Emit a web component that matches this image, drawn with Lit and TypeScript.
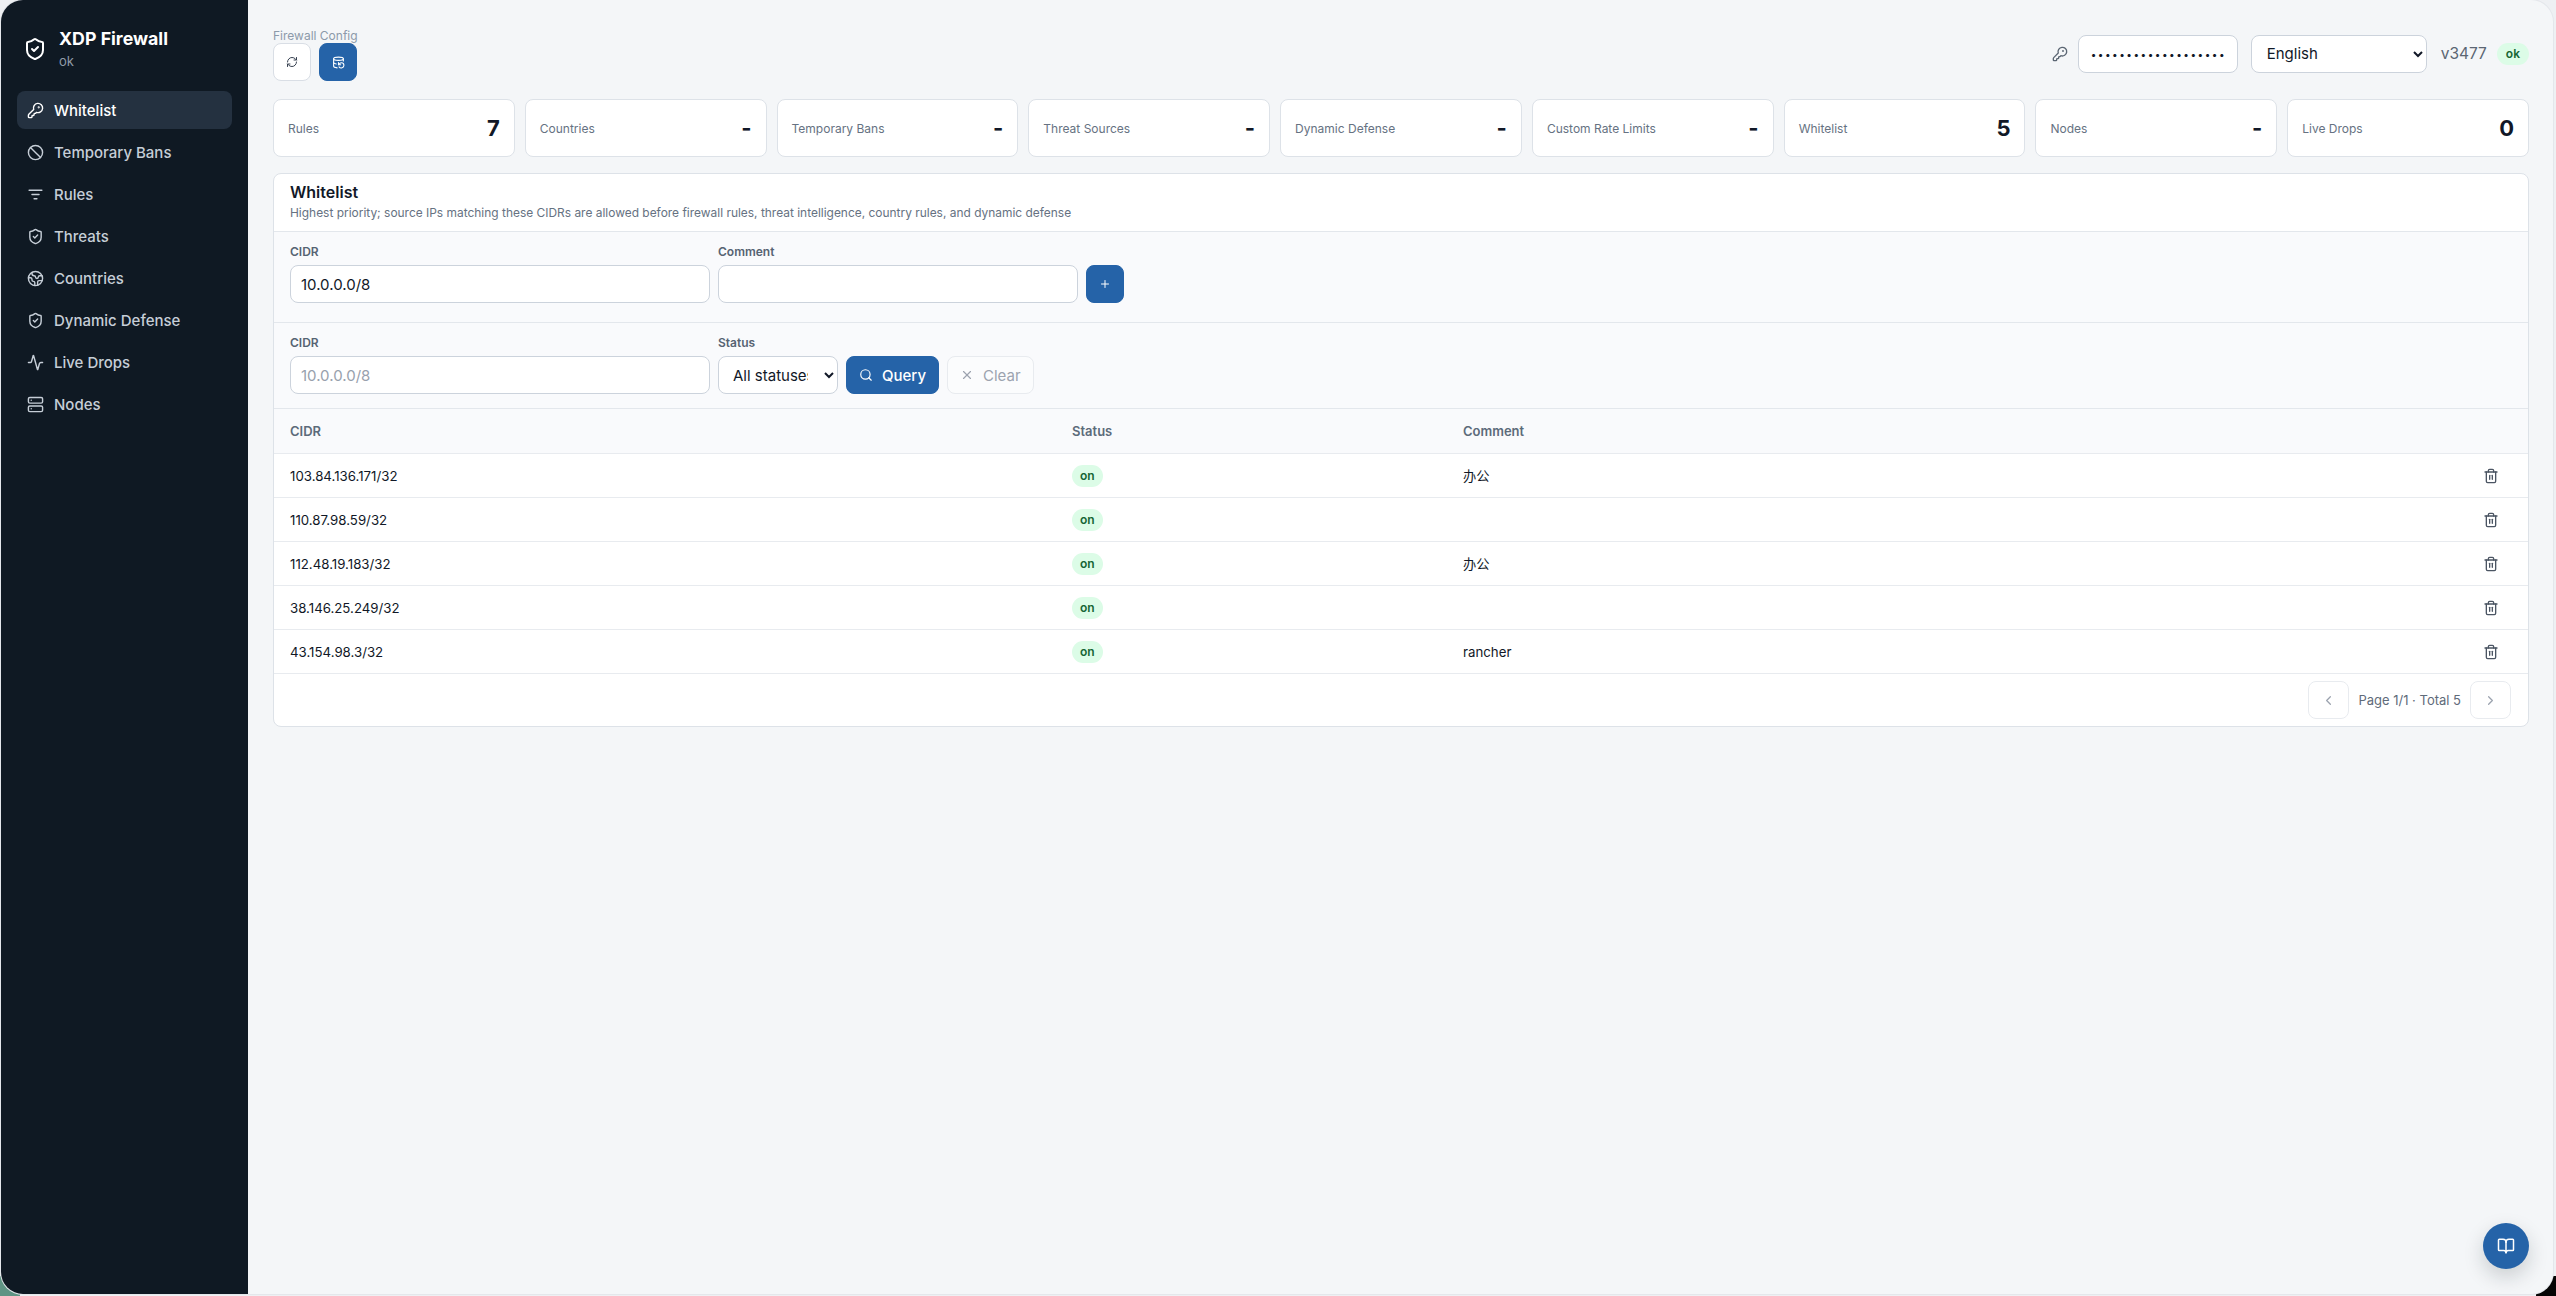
import { LitElement, html, css, svg } from "lit";
import { customElement } from "lit/decorators.js";

// lucide outlines, stroke only
const ICONS: Record<string, unknown> = {
  key: svg`<path d="M2.586 17.414A2 2 0 0 0 2 18.828V21a1 1 0 0 0 1 1h3a1 1 0 0 0 1-1v-1a1 1 0 0 1 1-1h1a1 1 0 0 0 1-1v-1a1 1 0 0 1 1-1h.172a2 2 0 0 0 1.414-.586l.814-.814a6.5 6.5 0 1 0-4-4z"/><circle cx="16.5" cy="7.5" r=".5" fill="currentColor"/>`,
  ban: svg`<circle cx="12" cy="12" r="10"/><path d="m4.9 4.9 14.2 14.2"/>`,
  filter: svg`<path d="M3 6h18"/><path d="M7 12h10"/><path d="M10 18h4"/>`,
  shield: svg`<path d="M20 13c0 5-3.5 7.5-7.66 8.95a1 1 0 0 1-.67-.01C7.5 20.5 4 18 4 13V6a1 1 0 0 1 1-1c2 0 4.5-1.2 6.24-2.72a1.17 1.17 0 0 1 1.52 0C14.51 3.81 17 5 19 5a1 1 0 0 1 1 1z"/><path d="m9 12 2 2 4-4"/>`,
  earth: svg`<path d="M21.54 15H17a2 2 0 0 0-2 2v4.54"/><path d="M7 3.34V5a3 3 0 0 0 3 3a2 2 0 0 1 2 2c0 1.1.9 2 2 2a2 2 0 0 0 2-2c0-1.1.9-2 2-2h3.17"/><path d="M11 21.95V18a2 2 0 0 0-2-2a2 2 0 0 1-2-2v-1a2 2 0 0 0-2-2H2.05"/><circle cx="12" cy="12" r="10"/>`,
  activity: svg`<path d="M22 12h-2.48a2 2 0 0 0-1.93 1.46l-2.35 8.36a.25.25 0 0 1-.48 0L9.24 2.18a.25.25 0 0 0-.48 0l-2.35 8.36A2 2 0 0 1 4.49 12H2"/>`,
  server: svg`<rect width="20" height="8" x="2" y="2" rx="2"/><rect width="20" height="8" x="2" y="14" rx="2"/><path d="M6 6h.01"/><path d="M6 18h.01"/>`,
  refresh: svg`<path d="M3 12a9 9 0 0 1 9-9 9.75 9.75 0 0 1 6.74 2.74L21 8"/><path d="M21 3v5h-5"/><path d="M21 12a9 9 0 0 1-9 9 9.75 9.75 0 0 1-6.74-2.74L3 16"/><path d="M8 16H3v5"/>`,
  database: svg`<ellipse cx="12" cy="5" rx="9" ry="3"/><path d="M3 12a9 3 0 0 0 5 2.69"/><path d="M21 9.3V5"/><path d="M3 5v14a9 3 0 0 0 6.47 2.88"/><path d="M12 12v4h4"/><path d="M13 20a5 5 0 0 0 9-3 4.5 4.5 0 0 0-4.5-4.5c-1.33 0-2.54.54-3.41 1.41L12 16"/>`,
  search: svg`<circle cx="11" cy="11" r="8"/><path d="m21 21-4.3-4.3"/>`,
  x: svg`<path d="M18 6 6 18"/><path d="m6 6 12 12"/>`,
  plus: svg`<path d="M5 12h14"/><path d="M12 5v14"/>`,
  trash: svg`<path d="M3 6h18"/><path d="M19 6v14c0 1-1 2-2 2H7c-1 0-2-1-2-2V6"/><path d="M8 6V4c0-1 1-2 2-2h4c1 0 2 1 2 2v2"/><path d="M10 11v6"/><path d="M14 11v6"/>`,
  left: svg`<path d="m15 18-6-6 6-6"/>`,
  right: svg`<path d="m9 18 6-6-6-6"/>`,
  book: svg`<path d="M12 7v14"/><path d="M3 18a1 1 0 0 1-1-1V4a1 1 0 0 1 1-1h5a4 4 0 0 1 4 4 4 4 0 0 1 4-4h5a1 1 0 0 1 1 1v13a1 1 0 0 1-1 1h-6a3 3 0 0 0-3 3 3 3 0 0 0-3-3z"/>`,
};

const icon = (name: string, size = 16) => html`<svg
  width=${size}
  height=${size}
  viewBox="0 0 24 24"
  fill="none"
  stroke="currentColor"
  stroke-width="2"
  stroke-linecap="round"
  stroke-linejoin="round"
>${ICONS[name]}</svg>`;

const NAV = [
  ["key", "Whitelist"],
  ["ban", "Temporary Bans"],
  ["filter", "Rules"],
  ["shield", "Threats"],
  ["earth", "Countries"],
  ["shield", "Dynamic Defense"],
  ["activity", "Live Drops"],
  ["server", "Nodes"],
];

const STATS = [
  ["Rules", "7"],
  ["Countries", "-"],
  ["Temporary Bans", "-"],
  ["Threat Sources", "-"],
  ["Dynamic Defense", "-"],
  ["Custom Rate Limits", "-"],
  ["Whitelist", "5"],
  ["Nodes", "-"],
  ["Live Drops", "0"],
];

const ROWS = [
  ["103.84.136.171/32", "办公"],
  ["110.87.98.59/32", ""],
  ["112.48.19.183/32", "办公"],
  ["38.146.25.249/32", ""],
  ["43.154.98.3/32", "rancher"],
];

@customElement("app-root")
export class AppRoot extends LitElement {
  static styles = css`
    :host {
      display: block;
      height: 100vh;
      box-sizing: border-box;
      padding: 0 3px 2px 1px;
      font-family: Inter, "Noto Sans CJK SC", sans-serif;
      color: #111827;
      background:
        linear-gradient(#5f9484, #5f9484) left bottom / 20px 20px no-repeat,
        linear-gradient(#050505, #050505) right bottom / 20px 20px no-repeat,
        #eef0f3;
    }
    * {
      box-sizing: border-box;
    }
    svg {
      display: block;
      flex: none;
    }
    .window {
      position: relative;
      display: flex;
      height: 100%;
      overflow: hidden;
      border-radius: 22px;
      background: #f4f6f8;
      box-shadow: 0 0 0 1px #e4e7eb;
    }
    .sidebar {
      flex: none;
      width: 247px;
      background: #0f1923;
      padding: 0 16px;
    }
    .brand {
      display: flex;
      align-items: center;
      gap: 12px;
      height: 91px;
      padding: 7px 0 0 6px;
      color: #fff;
    }
    .brand-name {
      font-size: 17.75px;
      font-weight: 700;
      line-height: 24px;
    }
    .brand-status {
      font-size: 13px;
      line-height: 20px;
      color: #8f9ba8;
    }
    .nav {
      display: flex;
      flex-direction: column;
      gap: 4px;
    }
    .nav-item {
      display: flex;
      align-items: center;
      gap: 10px;
      height: 38px;
      padding: 0 10px;
      border-radius: 8px;
      font-size: 15px;
      font-weight: 500;
      color: #c6ced7;
    }
    .nav-item.active {
      background: #243140;
      color: #fff;
    }
    .content {
      flex: 1;
      min-width: 0;
      padding: 28px 24px 0 25px;
    }
    .topbar {
      display: flex;
      align-items: center;
      justify-content: space-between;
      margin-bottom: 18px;
    }
    .crumb {
      font-size: 12px;
      line-height: 15px;
      color: #8c9aaa;
    }
    .actions {
      display: flex;
      gap: 8px;
    }
    .icon-btn {
      display: flex;
      align-items: center;
      justify-content: center;
      width: 38px;
      height: 38px;
      padding: 0;
      border: 1px solid #d9dee5;
      border-radius: 8px;
      background: #fff;
      color: #374151;
    }
    .icon-btn.primary {
      border-color: #2563a8;
      background: #2563a8;
      color: #fff;
    }
    .icon-btn.ghost {
      width: 41px;
      border-color: #e8ebef;
      color: #9ca3af;
    }
    .top-right {
      display: flex;
      align-items: center;
      margin-top: -2px;
      color: #5b6673;
    }
    .key {
      margin-right: 10px;
    }
    input,
    select {
      height: 38px;
      padding: 0 10px;
      border: 1px solid #ccd3dc;
      border-radius: 8px;
      background: #fff;
      color: #111827;
      font-family: inherit;
      font-size: 15px;
      outline: none;
    }
    input::placeholder {
      color: #98a1ad;
    }
    .password {
      width: 160px;
      padding: 0 12px;
      font-size: 10px;
      letter-spacing: 1.5px;
    }
    .lang {
      width: 176px;
      margin-left: 13px;
      padding: 0 5px 0 11px;
    }
    .version {
      margin-left: 14px;
      font-size: 15.5px;
    }
    .ok {
      margin-left: 10px;
      padding: 0 9px;
      border-radius: 999px;
      background: #dcfce7;
      color: #166534;
      font-size: 12px;
      font-weight: 600;
      line-height: 22px;
    }
    .stats {
      display: grid;
      grid-template-columns: repeat(9, 1fr);
      gap: 10px;
      margin-bottom: 16px;
    }
    .stat {
      display: flex;
      align-items: center;
      justify-content: space-between;
      height: 58px;
      padding: 0 14px;
      border: 1px solid #dde2e8;
      border-radius: 8px;
      background: #fff;
    }
    .stat-label {
      font-size: 12px;
      color: #667282;
    }
    .stat-value {
      font-size: 22px;
      font-weight: 700;
      line-height: 28px;
    }
    .card {
      border: 1px solid #dde2e8;
      border-radius: 8px;
      background: #fff;
      overflow: hidden;
    }
    .card-head {
      padding: 7px 16px 9px;
      border-bottom: 1px solid #e3e7ec;
    }
    .card-title {
      font-size: 16px;
      font-weight: 600;
      line-height: 22px;
    }
    .card-sub {
      padding-top: 1px;
      font-size: 11.95px;
      line-height: 18px;
      color: #667282;
    }
    .form {
      display: flex;
      align-items: flex-end;
      gap: 8px;
      padding: 12px 16px 14px;
      border-bottom: 1px solid #e3e7ec;
      background: #f9fafc;
    }
    .form.add {
      padding-bottom: 19px;
    }
    .field {
      display: flex;
      flex-direction: column;
    }
    .field label {
      margin-bottom: 5px;
      font-size: 12px;
      font-weight: 600;
      line-height: 16px;
      color: #566372;
    }
    .w-cidr {
      width: 420px;
    }
    .w-comment {
      width: 360px;
    }
    .w-status {
      width: 120px;
      padding: 0 13px 0 10px;
    }
    .btn {
      display: flex;
      align-items: center;
      gap: 9px;
      height: 38px;
      padding: 0 12px;
      border: 1px solid #2563a8;
      border-radius: 8px;
      background: #2563a8;
      color: #fff;
      font-family: inherit;
      font-size: 15px;
      font-weight: 500;
    }
    .btn.clear {
      border-color: #e8ebef;
      background: #fbfcfd;
      color: #9ca3af;
      font-weight: 400;
    }
    .row {
      display: grid;
      grid-template-columns: 782px 391px 1fr 45px;
      align-items: center;
      height: 44px;
      padding-left: 16px;
      border-bottom: 1px solid #e8ebef;
      font-size: 13.25px;
    }
    .row.head {
      height: 45px;
      background: #f9fafc;
      font-size: 13px;
      font-weight: 600;
      color: #5c6b7a;
    }
    .chip {
      display: inline-block;
      padding: 0 8px;
      border-radius: 999px;
      background: #dcfce7;
      color: #166534;
      font-size: 12px;
      font-weight: 600;
      line-height: 22px;
    }
    .trash {
      color: #4b5563;
    }
    .pager {
      display: flex;
      align-items: center;
      justify-content: flex-end;
      gap: 9px;
      height: 52px;
      padding: 0 17px 0 0;
      font-size: 13px;
      color: #5f6b7a;
    }
    .help {
      position: absolute;
      right: 24px;
      bottom: 25px;
      display: flex;
      align-items: center;
      justify-content: center;
      width: 46px;
      height: 46px;
      border-radius: 50%;
      background: #2563a8;
      color: #fff;
      box-shadow: 0 8px 20px rgba(15, 25, 35, 0.18);
    }
  `;

  render() {
    return html`
      <div class="window">
        <aside class="sidebar">
          <div class="brand">
            ${icon("shield", 24)}
            <div>
              <div class="brand-name">XDP Firewall</div>
              <div class="brand-status">ok</div>
            </div>
          </div>
          <nav class="nav">
            ${NAV.map(
              ([name, label], i) => html`
                <div class="nav-item ${i === 0 ? "active" : ""}">
                  ${icon(name, 17)}<span>${label}</span>
                </div>
              `
            )}
          </nav>
        </aside>
        <main class="content">
          <div class="topbar">
            <div>
              <div class="crumb">Firewall Config</div>
              <div class="actions">
                <button class="icon-btn">${icon("refresh", 12)}</button>
                <button class="icon-btn primary">${icon("database", 13)}</button>
              </div>
            </div>
            <div class="top-right">
              <span class="key">${icon("key", 16)}</span>
              <input class="password" type="password" value="12345678901234567890" />
              <select class="lang"><option>English</option></select>
              <span class="version">v3477</span>
              <span class="ok">ok</span>
            </div>
          </div>
          <section class="stats">
            ${STATS.map(
              ([label, value]) => html`
                <div class="stat">
                  <span class="stat-label">${label}</span>
                  <span class="stat-value">${value}</span>
                </div>
              `
            )}
          </section>
          <section class="card">
            <div class="card-head">
              <div class="card-title">Whitelist</div>
              <div class="card-sub">
                Highest priority; source IPs matching these CIDRs are allowed before firewall rules,
                threat intelligence, country rules, and dynamic defense
              </div>
            </div>
            <div class="form add">
              <div class="field">
                <label>CIDR</label>
                <input class="w-cidr" value="10.0.0.0/8" />
              </div>
              <div class="field">
                <label>Comment</label>
                <input class="w-comment" />
              </div>
              <button class="icon-btn primary">${icon("plus", 12)}</button>
            </div>
            <div class="form">
              <div class="field">
                <label>CIDR</label>
                <input class="w-cidr" placeholder="10.0.0.0/8" />
              </div>
              <div class="field">
                <label>Status</label>
                <select class="w-status"><option>All statuses</option></select>
              </div>
              <button class="btn">${icon("search", 14)}Query</button>
              <button class="btn clear">${icon("x", 14)}Clear</button>
            </div>
            <div class="row head">
              <span>CIDR</span><span>Status</span><span>Comment</span><span></span>
            </div>
            ${ROWS.map(
              ([cidr, comment]) => html`
                <div class="row">
                  <span>${cidr}</span>
                  <span><span class="chip">on</span></span>
                  <span>${comment}</span>
                  <span class="trash">${icon("trash", 16)}</span>
                </div>
              `
            )}
            <div class="pager">
              <button class="icon-btn ghost">${icon("left", 15)}</button>
              <span>Page 1/1 · Total 5</span>
              <button class="icon-btn ghost">${icon("right", 15)}</button>
            </div>
          </section>
        </main>
        <div class="help">${icon("book", 18)}</div>
      </div>
    `;
  }
}
